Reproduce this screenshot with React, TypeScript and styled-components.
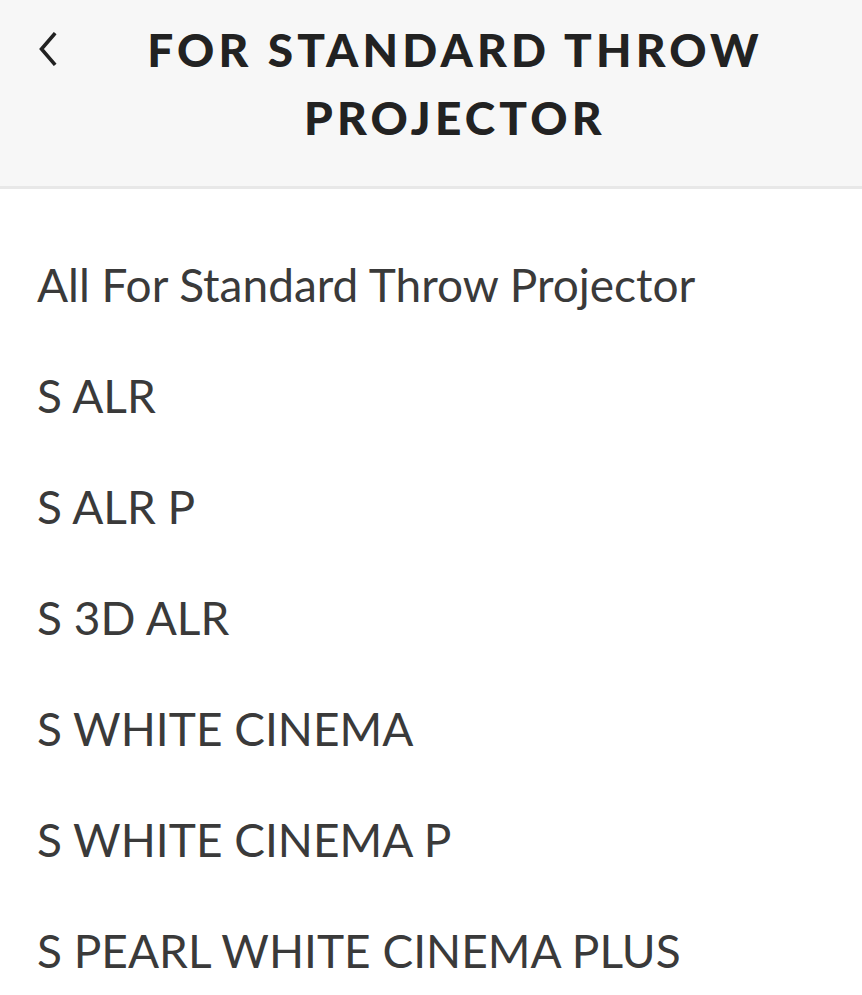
import React from "react";
import styled, { createGlobalStyle } from "styled-components";

const Global = createGlobalStyle`
  html, body { margin: 0; padding: 0; background: #ffffff; }
  body { font-family: "Lato", "Liberation Sans", sans-serif; }
`;

const Page = styled.div`
  width: 862px;
  min-height: 995px;
  background: #ffffff;
`;

const Header = styled.header`
  display: grid;
  grid-template-columns: 100px 1fr 52px;
  align-items: start;
  background: #f7f7f7;
  border-bottom: 3px solid #e8e8e8;
  height: 189px;
  box-sizing: border-box;
  padding-top: 16px;
`;

const BackButton = styled.button`
  background: none;
  border: none;
  padding: 0;
  margin: 16px 0 0 30px;
  width: 34px;
  height: 34px;
  display: flex;
  align-items: center;
  justify-content: center;
  color: #222;
  cursor: pointer;
`;

const Title = styled.h1`
  margin: 0;
  text-align: center;
  font-family: "Lato", "Liberation Sans", sans-serif;
  font-weight: 900;
  font-size: 46px;
  line-height: 68px;
  letter-spacing: 4.2px;
  text-transform: uppercase;
  color: #222;
`;

const List = styled.ul`
  list-style: none;
  margin: 0;
  padding: 61px 0 0 0;
`;

const Item = styled.li`
  padding: 0 0 0 37px;
  height: 111px;
  display: flex;
  align-items: flex-start;
  font-family: "Lato", "Liberation Sans", sans-serif;
  font-size: 46px;
  line-height: 70px;
  color: #3a3a3a;
  font-weight: 400;
`;

const items = [
  "All For Standard Throw Projector",
  "S ALR",
  "S ALR P",
  "S 3D ALR",
  "S WHITE CINEMA",
  "S WHITE CINEMA P",
  "S PEARL WHITE CINEMA PLUS",
];

export default function App() {
  return (
    <Page>
      <Global />
      <Header>
        <BackButton aria-label="Back">
          <svg width="22" height="34" viewBox="0 0 22 34" fill="none">
            <path d="M18 2.5 L5.5 17 L18 31.5" stroke="currentColor" strokeWidth="3.6" strokeLinecap="square" />
          </svg>
        </BackButton>
        <Title>For Standard Throw Projector</Title>
        <div />
      </Header>
      <List>
        {items.map((t) => (
          <Item key={t}>{t}</Item>
        ))}
      </List>
    </Page>
  );
}
